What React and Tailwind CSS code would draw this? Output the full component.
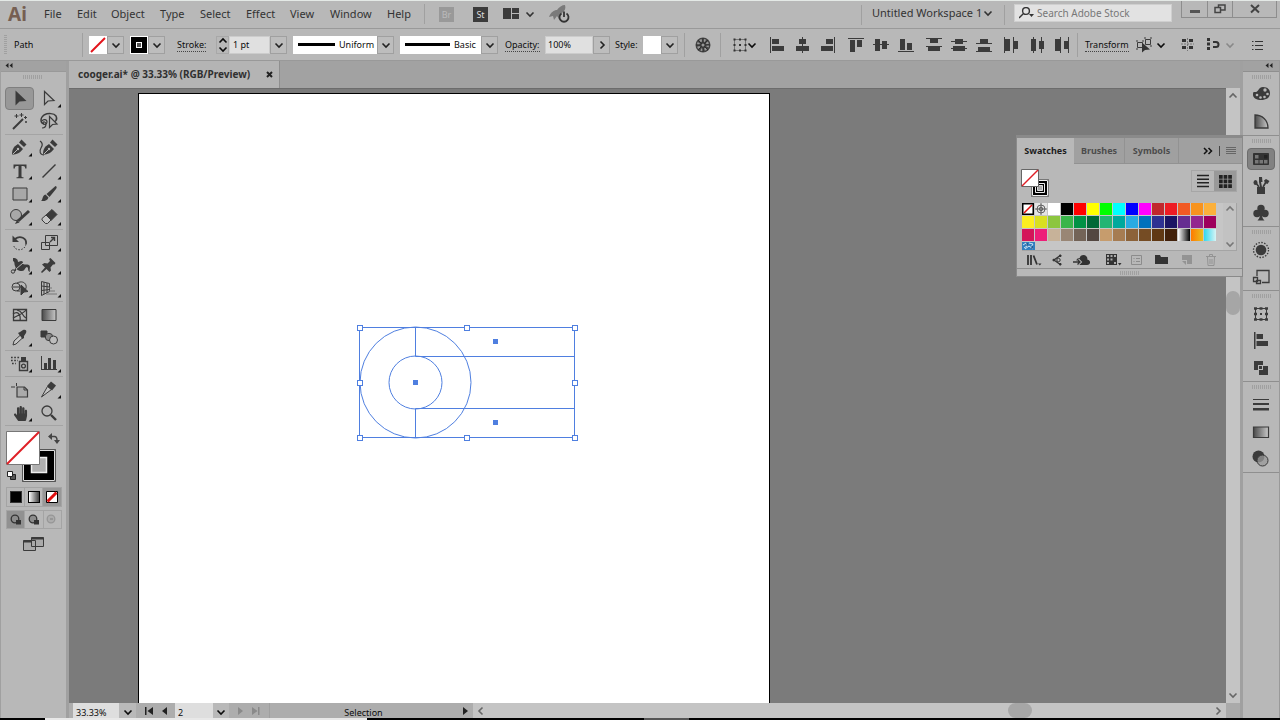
import { FaHandPaper } from "react-icons/fa";

const menus = [
  { name: "File", width: "w-[33px]" },
  { name: "Edit", width: "w-[34px]" },
  { name: "Object", width: "w-[49px]" },
  { name: "Type", width: "w-[40px]" },
  { name: "Select", width: "w-[46px]" },
  { name: "Effect", width: "w-[44px]" },
  { name: "View", width: "w-[40px]" },
  { name: "Window", width: "w-[57px]" },
  { name: "Help", width: "w-[40px]" },
];

const swatchRows = [
  ["none", "registration", "#ffffff", "#000000", "#ff0000", "#ffff00", "#00ff00", "#00ffff", "#0000ff", "#ff00ff", "#c1272d", "#ed1c24", "#f15a24", "#f7931e", "#fbb03b"],
  ["#fcee21", "#d9e021", "#8cc63f", "#39b54a", "#009245", "#006837", "#22b573", "#00a99d", "#29abe2", "#0071bc", "#2e3192", "#1b1464", "#662d91", "#93278f", "#9e005d"],
  ["#d4145a", "#ed1e79", "#c7b299", "#998675", "#736357", "#534741", "#c69c6d", "#a67c52", "#8c6239", "#754c24", "#603813", "#42210b", "linear-gradient(90deg,#fff,#000)", "linear-gradient(90deg,#ff7a00,#e8c020)", "linear-gradient(90deg,#30d8f0,#d8f4f4)"],
];

function Chevron({ dir = "down", className = "" }) {
  const paths = {
    down: "M1.5 3.5 5 7l3.5-3.5",
    up: "M1.5 6.5 5 3l3.5 3.5",
    right: "M3.5 1.5 7 5 3.5 8.5",
    left: "M6.5 1.5 3 5l3.5 3.5",
  };
  return (
    <svg viewBox="0 0 10 10" className={`h-[10px] w-[10px] shrink-0 ${className}`} fill="none" stroke="currentColor" strokeWidth="1.6">
      <path d={paths[dir]} />
    </svg>
  );
}

function DropButton({ label, dir }) {
  return (
    <button aria-label={label} className="flex h-[18px] w-[17px] shrink-0 items-center justify-center border border-[#a0a0a0] bg-[#bdbdbd] text-[#222]">
      <Chevron dir={dir} />
    </button>
  );
}

function Grip() {
  return (
    <svg viewBox="0 0 19 4" className="h-1 w-[19px]">
      <path d="M.5 0v4M2.5 0v4M4.5 0v4M6.5 0v4M8.5 0v4M10.5 0v4M12.5 0v4M14.5 0v4M16.5 0v4M18.5 0v4" stroke="#a0a0a0" />
    </svg>
  );
}

function Divider() {
  return <span className="h-6 w-px shrink-0 bg-[#a0a0a0]" />;
}

/* ---------- Menu bar ---------- */

function MenuBar() {
  return (
    <header className="flex h-[28px] shrink-0 border-t border-[#e4e9e6] bg-[#b8b8b8] text-[11px] text-[#333]">
      <div className="flex min-w-0 flex-1 items-center pb-px">
        <span className="w-[44px] shrink-0 pl-2 text-[19px] leading-6 font-bold text-[#765f52]">Ai</span>
        <nav className="flex">
          {menus.map((m) => (
            <button key={m.name} className={`shrink-0 text-left ${m.width}`}>
              {m.name}
            </button>
          ))}
        </nav>
        <span className="ml-[-3px] h-5 w-px shrink-0 bg-[#a0a0a0]" />
        <button disabled className="ml-[14px] h-[15px] w-[15px] shrink-0 bg-[#999] text-[9px] leading-[15px] text-[#bbb]">Br</button>
        <button className="ml-[19px] h-[15px] w-[15px] shrink-0 bg-[#3b3b3b] text-[9px] leading-[15px] text-[#ddd]">St</button>
        <button aria-label="Arrange documents" className="ml-[15px] flex shrink-0 items-center gap-[6px]">
          <svg viewBox="0 0 16 12" className="h-3 w-4" fill="#3b3b3b">
            <path d="M0 0h8v11H0zM9 0h7v5H9zM9 6h7v5H9z" />
          </svg>
          <Chevron />
        </button>
        <button aria-label="GPU performance" className="ml-[14px] shrink-0">
          <svg viewBox="0 0 22 20" className="h-5 w-[22px]">
            <path d="M0 13C2 8 5 6 8 6c2-3 5-5 8-5 1 3 0 6-3 8-2 2-3 3-3 6l-2-3-3 4-1-4z" fill="#7a7a7a" />
            <path d="M12.500 9.500a4.500 4.500 0 1 0 5 0M15 7.500v5.500" fill="none" stroke="#333" strokeWidth="1.800" />
          </svg>
        </button>
      </div>
      <span className="mt-1 h-5 w-px bg-[#a0a0a0]" />
      <label className="ml-[10px] flex h-6 items-center">
        <select aria-label="Workspace" className="w-[111px] appearance-none bg-transparent">
          <option>Untitled Workspace 1</option>
        </select>
        <Chevron />
      </label>
      <span className="mt-1 ml-[11px] h-5 w-px bg-[#a0a0a0]" />
      <label className="mt-[3px] ml-[9px] flex h-[18px] w-[158px] items-center border border-[#cfcfcf] bg-[#e2e2e2] pl-1">
        <svg viewBox="0 0 16 12" className="h-3 w-4 shrink-0" fill="none" stroke="#333" strokeWidth="1.4">
          <circle cx="7" cy="4" r="3.400" />
          <path d="M4.500 6.500 0 11" />
          <path d="M10 7h5l-2.500 3z" fill="#333" stroke="none" />
        </svg>
        <input aria-label="Search" placeholder="Search Adobe Stock" className="ml-[2px] w-full min-w-0 bg-transparent text-[10px] outline-none placeholder:text-[#777]" />
      </label>
      <div className="mr-[3px] ml-[9px] flex h-[17px] border border-t-0 border-[#8d8d8d]">
        <button aria-label="Minimize" className="flex w-[25px] items-center justify-center">
          <span className="mt-1 h-[3px] w-[10px] bg-[#555]" />
        </button>
        <button aria-label="Restore" className="flex w-[26px] items-center justify-center border-x border-[#8d8d8d]">
          <svg viewBox="0 0 12 10" className="h-[10px] w-3" fill="#b8b8b8" stroke="#444" strokeWidth="1.500">
            <path d="M4.500 1h6.500v5H4.500z" />
            <path d="M1 3.500h5.500v5H1z" />
          </svg>
        </button>
        <button aria-label="Close" className="flex w-[43px] items-center justify-center">
          <svg viewBox="0 0 10 10" className="h-[10px] w-[10px]" stroke="#444" strokeWidth="2">
            <path d="m1 1 8 7.500M9 1 1 8.500" />
          </svg>
        </button>
      </div>
    </header>
  );
}

/* ---------- Control bar ---------- */

const alignGroups = [
  [
    { name: "Align left", d: "M0 0h1v16H0zM2 2h7v5H2zM2 9h12v5H2z" },
    { name: "Align center", d: "M7 0h1v16H7zM4 2h7v5H4zM1 9h13v5H1z" },
    { name: "Align right", d: "M14 0h1v16h-1zM6 2h7v5H6zM1 9h12v5H1z" },
  ],
  [
    { name: "Align top", d: "M0 1h16v1H0zM2 3h5v12H2zM9 3h5v7H9z" },
    { name: "Align middle", d: "M0 7h16v1H0zM2 2h5v12H2zM9 4h5v8H9z" },
    { name: "Align bottom", d: "M0 14h16v1H0zM2 2h5v11H2zM9 6h5v7H9z" },
  ],
  [
    { name: "Distribute top", d: "M0 1h16v1H0zM4 2h8v4H4zM0 9h16v1H0zM2 10h12v4H2z" },
    { name: "Distribute vertical center", d: "M0 4h16v1H0zM4 2h8v5H4zM0 11h16v1H0zM2 9h12v5H2z" },
    { name: "Distribute bottom", d: "M0 6h16v1H0zM4 2h8v4H4zM0 14h16v1H0zM2 10h12v4H2z" },
  ],
  [
    { name: "Distribute left", d: "M0 0h1v16H0zM1 2h5v12H1zM9 0h1v16H9zM10 4h4v8h-4z" },
    { name: "Distribute horizontal center", d: "M4 0h1v16H4zM2 2h5v12H2zM12 0h1v16h-1zM10 4h5v8h-5z" },
    { name: "Distribute right", d: "M6 0h1v16H6zM1 2h5v12H1zM14 0h1v16h-1zM10 4h4v8h-4z" },
  ],
];

function ControlBar() {
  return (
    <section className="flex h-[33px] shrink-0 items-center border-y border-[#999] bg-[#b8b8b8] text-[9px] text-[#0c0c0c]">
      <svg viewBox="0 0 3 20" className="ml-1 h-5 w-[3px] shrink-0">
        <path d="M1.500 0v20" stroke="#a0a0a0" strokeWidth="3" strokeDasharray="1 1" />
      </svg>
      <span className="ml-[7px] w-[68px] shrink-0">Path</span>
      <Divider />
      <button aria-label="Fill" className="ml-[6px] h-[18px] w-[18px] shrink-0 bg-white">
        <svg viewBox="0 0 18 18" className="h-[18px] w-[18px]">
          <path d="m2 16 14-14" stroke="#e3131b" strokeWidth="1.900" />
        </svg>
      </button>
      <DropButton label="Fill options" />
      <button aria-label="Stroke color" className="ml-[6px] h-[18px] w-[18px] shrink-0 border border-white bg-black p-[5px]">
        <span className="block h-[6px] w-[6px] border border-white bg-[#555]" />
      </button>
      <DropButton label="Stroke color options" />
      <a href="#stroke" className="ml-[12px] w-[39px] shrink-0">
        <span className="border-b border-dotted border-[#444]">Stroke:</span>
      </a>
      <div className="flex h-[18px] w-[13px] shrink-0 flex-col items-center justify-between border border-[#a8a8a8]">
        <button aria-label="Increase stroke weight" className="flex h-2 items-center">
          <Chevron dir="up" />
        </button>
        <button aria-label="Decrease stroke weight" className="flex h-2 items-center">
          <Chevron />
        </button>
      </div>
      <input aria-label="Stroke weight" defaultValue="1 pt" className="h-[18px] w-[41px] shrink-0 border border-[#ccc] bg-[#e0e0e0] pl-[3px]" />
      <DropButton label="Stroke weight presets" />
      <label className="ml-[6px] flex h-[18px] w-[101px] shrink-0 items-center bg-white">
        <span className="ml-[5px] h-[3px] w-[37px] shrink-0 bg-black" />
        <select aria-label="Width profile" className="ml-[4px] w-[38px] appearance-none bg-transparent">
          <option>Uniform</option>
        </select>
        <DropButton label="Width profiles" />
      </label>
      <label className="ml-[6px] flex h-[18px] w-[98px] shrink-0 items-center bg-white">
        <span className="ml-[5px] h-[3px] w-[45px] shrink-0 bg-black" />
        <select aria-label="Brush definition" className="ml-[4px] w-[27px] appearance-none bg-transparent">
          <option>Basic</option>
        </select>
        <DropButton label="Brush definitions" />
      </label>
      <a href="#opacity" className="ml-[7px] w-[40px] shrink-0">
        <span className="border-b border-dotted border-[#444]">Opacity:</span>
      </a>
      <input aria-label="Opacity" defaultValue="100%" className="h-[18px] w-[48px] shrink-0 border border-[#ccc] bg-[#e0e0e0] pl-[2px]" />
      <DropButton label="Opacity slider" dir="right" />
      <span className="ml-[5px] w-[28px] shrink-0">Style:</span>
      <button aria-label="Graphic style" className="h-[18px] w-[18px] shrink-0 bg-white" />
      <DropButton label="Graphic styles" />
      <span className="ml-[6px] h-6 w-px shrink-0 bg-[#a0a0a0]" />
      <button aria-label="Recolor artwork" className="ml-[10px] shrink-0">
        <svg viewBox="0 0 16 16" className="h-4 w-4">
          <circle cx="8" cy="8" r="7.500" fill="#444" />
          <circle cx="8" cy="8" r="4.800" fill="none" stroke="#999" strokeWidth="2.500" strokeDasharray="2 1.770" />
          <path d="M8 1v14M1 8h14M3 3l10 10M13 3 3 13" stroke="#2e2e2e" />
          <circle cx="8" cy="8" r="1.500" fill="#999" />
        </svg>
      </button>
      <span className="ml-[9px] h-6 w-px shrink-0 bg-[#a0a0a0]" />
      <button aria-label="Align to" className="ml-[12px] flex shrink-0 items-center">
        <svg viewBox="0 0 14 14" className="h-[14px] w-[14px]" fill="none" stroke="#333">
          <path d="M1.500 1.500h11v11h-11z" strokeDasharray="1 1" />
          <path d="M.5 1.500h2M6 1.500h2M11.500 1.500h2M.5 7h2M6 7h2M11.500 7h2M.5 12.500h2M6 12.500h2M11.500 12.500h2" strokeWidth="2" />
        </svg>
        <Chevron />
      </button>
      <div className="ml-[8px] flex shrink-0 gap-[3px]">
        {alignGroups.map((group) => (
          <div key={group[0].name} className="flex">
            {group.map((a) => (
              <button key={a.name} aria-label={a.name} className="flex w-[25px] justify-center">
                <svg viewBox="0 0 16 16" className="h-4 w-4" fill="#3b3b3b">
                  <path d={a.d} />
                </svg>
              </button>
            ))}
          </div>
        ))}
      </div>
      <span className="ml-[3px] h-6 w-px shrink-0 bg-[#a0a0a0]" />
      <a href="#transform" className="ml-[7px] w-[51px] shrink-0">
        <span className="border-b border-dotted border-[#444]">Transform</span>
      </a>
      <button aria-label="Select similar" className="flex shrink-0 items-center gap-[3px]">
        <svg viewBox="0 0 17 16" className="h-4 w-[17px]" fill="none" stroke="#3b3b3b">
          <path d="M1.500 5.500h5v5h-5zM9.500 2.500h5v5h-5zM0 4h2M6 4h2M0 12h2M8 1h2M14 1h2M14 9h2" />
          <path d="M6 5.500v10l3-2.500 5-.5z" fill="#333" stroke="none" />
        </svg>
        <Chevron />
      </button>
      <div className="ml-auto flex shrink-0 items-center">
        <button aria-label="Align to pixel grid">
          <svg viewBox="0 0 13 13" className="h-[13px] w-[13px]" fill="#333">
            <path d="M1 1h4v3H1zM8 1h4v3H8zM1 8h4v3H1zM8 8h4v3H8z" />
            <path d="M6.500 0v13M0 6h13" stroke="#777" strokeDasharray="2 1" />
          </svg>
        </button>
        <button aria-label="Snap options" className="ml-3 flex items-center gap-1">
          <svg viewBox="0 0 15 13" className="h-[13px] w-[15px]" fill="#333">
            <path d="M1 0h3v3H1zM1 4.500h3v3H1zM1 9h3v3H1z" />
            <path d="M7 4h3a2.200 2.200 0 0 1 0 5H7" fill="none" stroke="#333" strokeWidth="2" />
          </svg>
          <Chevron className="text-[#888]" />
        </button>
        <button aria-label="Control bar menu" className="mr-[16px] ml-[17px]">
          <svg viewBox="0 0 12 10" className="h-[10px] w-3" stroke="#333">
            <path d="M0 1.500h1.500M3 1.500h8M0 5.500h1.500M3 5.500h8M0 9.500h1.500M3 9.500h8" />
          </svg>
        </button>
      </div>
    </section>
  );
}

/* ---------- Tools panel ---------- */

const dark = "#3b3b3b";

const nib = (
  <g fill={dark}>
    <path d="M5 18c0-5 1-8 6-11l5 5c-3 4-6 5-11 6z" />
    <path d="m12 5.500 2.500-3 5 5-2.500 2.500z" />
    <path d="m5.500 17.500 5-5" stroke="#b8b8b8" />
    <circle cx="11" cy="12" r="1.200" fill="#b8b8b8" />
  </g>
);

const toolGroups = [
  [
    { name: "Selection", art: <path d="M8.500 2.500v15l4-4 7-.5z" fill={dark} />, active: true },
    { name: "Direct Selection", flag: true, art: <path d="M8.500 3.500v13l3.500-3.500 6-.5z" fill="none" stroke={dark} strokeWidth="1.200" /> },
    {
      name: "Magic Wand",
      art: (
        <g stroke={dark} fill="none">
          <path d="m6 18 10-10" strokeWidth="2" />
          <path d="M9.500 3v4M7.500 5h4M14.500 2v4M12.500 4h4M18.500 5v3M17 6.500h3M19 10v2M18 11h2" />
        </g>
      ),
    },
    {
      name: "Lasso",
      art: (
        <g stroke={dark} fill="none">
          <path d="M8 13c-4-1-4-6 0-9 4-2 10-2 12 1 2 4-1 6-4 7" strokeWidth="1.500" />
          <path d="M6 10c1-2 5-2 5 1s-4 3-4 1 3-1 3 1-1 4-4 4" strokeWidth="1.200" />
          <path d="M13.500 5.500v11l3-3 4.500-.5z" fill="#b8b8b8" strokeWidth="1.200" />
        </g>
      ),
    },
  ],
  [
    { name: "Pen", flag: true, art: nib },
    {
      name: "Curvature",
      art: (
        <g>
          <g transform="translate(2 0)">{nib}</g>
          <path d="M4 4c3 2 3 4 1 7s-1 7 3 7" fill="none" stroke={dark} strokeWidth="1.200" />
        </g>
      ),
    },
    { name: "Type", flag: true, art: <path d="M6.500 4.500h13v4h-1.300c0-2-.7-2.600-2.200-2.600h-1.500v10c0 1 .5 1.300 2 1.300v1h-7v-1c1.500 0 2-.3 2-1.300v-10H10c-1.500 0-2.200.6-2.200 2.600H6.500z" fill={dark} /> },
    { name: "Line Segment", flag: true, art: <path d="M6.500 17.500 19.500 4.500" stroke={dark} strokeWidth="1.500" /> },
    { name: "Rectangle", flag: true, art: <path d="M6 5h14v12H6z" fill="#a8a8a8" stroke={dark} /> },
    {
      name: "Paintbrush",
      flag: true,
      art: (
        <g fill={dark}>
          <path d="M19.500 3c1.500.5 1.500 1.500.5 3l-6.500 8-3-3z" />
          <path d="m9.500 11.500 3 3c-1 3-4 4-7.500 3.500 2-1 1-5.500 4.500-6.500z" />
        </g>
      ),
    },
    {
      name: "Shaper",
      flag: true,
      art: (
        <g>
          <circle cx="9" cy="9" r="5.500" fill="#a8a8a8" stroke={dark} />
          <path d="m11 15 11-10" stroke={dark} strokeWidth="3" />
          <path d="m8 18 2-4 2.500 2.500z" fill={dark} />
        </g>
      ),
    },
    {
      name: "Eraser",
      flag: true,
      art: (
        <g stroke={dark}>
          <path d="m10 9 6-5.500 5 5-6 6z" fill={dark} />
          <path d="m10 9 5 5-3.500 3.500h-2L6 14v-1.500z" fill="#c4c4c4" />
        </g>
      ),
    },
  ],
  [
    {
      name: "Rotate",
      flag: true,
      art: (
        <g fill="none" stroke={dark}>
          <path d="M8 7c5-4 12-1 11 5" strokeWidth="1.800" />
          <path d="M19 12c-1 7-11 8-12.500 1" strokeDasharray="1.500 1.500" />
          <path d="M5.500 3.500v6.500H12z" fill={dark} stroke="none" />
        </g>
      ),
    },
    {
      name: "Scale",
      flag: true,
      art: (
        <g fill="none" stroke={dark}>
          <path d="M9.500 3.500h12v10h-12zM5.500 10.500h8v7h-8z" />
          <path d="m14 10 4-4M15 5.500h3.500V9" strokeWidth="1.400" />
        </g>
      ),
    },
    {
      name: "Width",
      flag: true,
      art: (
        <g fill={dark}>
          <path d="M6 3c4 0 5 2 5 4l3-1c2 0 2 1 2 3 2 1 4 0 6 1 2 2 0 4 1 7-3-1-1-4-3-5-2 0-2 4-5 4-4 0-6-2-7-5s0-4-2-5z" />
          <path d="M6 17c2-1 3-3 4-5M9 15c-2 0-3 1-4 3" fill="none" stroke={dark} strokeWidth="1.300" />
          <path d="m9 14 7-6" stroke="#b8b8b8" />
          <circle cx="6" cy="16.500" r="1.700" fill="#b8b8b8" stroke={dark} />
        </g>
      ),
    },
    { name: "Puppet Warp", flag: true, art: <path d="m13 4 1.500-1 5 5-1 1.500-1.500 0-2.500 3 .5 3-1.500 1.500-3-3-4.500 4-1-1 4-4.500-3-3L8.500 8l3 .5L14 6z" fill={dark} /> },
    {
      name: "Shape Builder",
      flag: true,
      art: (
        <g fill="none" stroke={dark}>
          <circle cx="9" cy="9" r="4" />
          <path d="M10 5c8-4 12 4 7 8M10 13h3M6 9h8" />
          <path d="M14 7v10l3-3 4-.5z" fill={dark} />
        </g>
      ),
    },
    {
      name: "Perspective Grid",
      flag: true,
      art: (
        <g fill="none" stroke={dark}>
          <path d="M5.500 3.500v14l8-4v-8zM5.500 8l8 1M5.500 12.500l8-1M8 4v12M11 5v10" />
          <path d="M13 10h3M13 13h6M10 16h11" stroke="#777" />
        </g>
      ),
    },
  ],
  [
    {
      name: "Mesh",
      art: (
        <g fill="none" stroke={dark}>
          <path d="M6.500 5.500h13v11h-13z" strokeWidth="1.300" />
          <path d="M6 10c5-4 8 1 7 7M10 6c6 1 4 5 9 8M6 14c5-3 10-4 13-8" strokeWidth="1.200" />
        </g>
      ),
    },
    { name: "Gradient", art: <path d="M6 5.500h14v11H6z" fill="url(#toolGradient)" stroke={dark} /> },
    {
      name: "Eyedropper",
      flag: true,
      art: (
        <g>
          <path d="m6 18 1-4 6.500-6 2.500 2.500L9 17z" fill="#c4c4c4" stroke={dark} />
          <path d="m11 6 2-1 3-2c3-1 4 1 3 3l-2 3v2l-1.500 1z" fill={dark} />
        </g>
      ),
    },
    {
      name: "Blend",
      art: (
        <g stroke={dark}>
          <path d="M5 4h6v6H5z" fill={dark} />
          <circle cx="13" cy="10" r="3.700" fill="#888" />
          <circle cx="17.500" cy="13" r="4" fill="#bdbdbd" />
        </g>
      ),
    },
  ],
  [
    {
      name: "Symbol Sprayer",
      flag: true,
      art: (
        <g fill="none" stroke={dark}>
          <path d="M12.500 8.500h8v9h-8z" strokeWidth="1.400" />
          <path d="M14 4h5v4h-5z" fill={dark} stroke="none" />
          <circle cx="16.500" cy="13" r="1.900" strokeWidth="1.300" />
          <path d="M4 4.500h9M4 7.500h7M5 10.500h4" strokeWidth="1.700" strokeDasharray="1.700 1.500" />
        </g>
      ),
    },
    { name: "Column Graph", flag: true, art: <path d="M5 3h1v13h15v1H5zM8 10h3v7H8zM12 5h3v12h-3zM17 7h3v10h-3z" fill={dark} /> },
  ],
  [
    {
      name: "Artboard",
      art: (
        <g fill="none" stroke={dark}>
          <path d="M10 8h7.500l3 3v7H10z" fill="#aaa" strokeWidth="1.200" />
          <path d="M9.500 4v3M4 8h4M17 8v3h3" />
        </g>
      ),
    },
    {
      name: "Slice",
      flag: true,
      art: (
        <g>
          <path d="m5.500 18 6-10.500 4 3z" fill="#c4c4c4" stroke={dark} />
          <path d="m11 7 4-4.500 5 4-4 5z" fill={dark} />
        </g>
      ),
    },
    { name: "Hand", flag: true, art: <FaHandPaper x="6" y="4" size="15" color={dark} /> },
    {
      name: "Zoom",
      art: (
        <g fill="none" stroke={dark}>
          <circle cx="11" cy="9" r="5" strokeWidth="1.300" />
          <path d="m15 13 5 5" strokeWidth="2.400" />
        </g>
      ),
    },
  ],
];

function ToolsPanel() {
  return (
    <aside className="flex w-[69px] shrink-0 flex-col border-r-[3px] border-l border-[#a0a0a0] bg-[#b8b8b8]">
      <button aria-label="Collapse tools" className="flex h-[11px] shrink-0 items-center border-b border-[#999] bg-[#a2a2a2] pl-[4px]">
        <svg viewBox="0 0 8 6" className="h-[6px] w-2" fill="#222">
          <path d="M3.500 0v5L.5 2.500zM7.500 0v5l-3-2.500z" />
        </svg>
      </button>
      <div className="flex h-[15px] shrink-0 items-center pl-[22px] pb-[5px]">
        <Grip />
      </div>
      <div className="flex flex-col pl-1">
        {toolGroups.map((group) => (
          <div key={group[0].name} className="mb-px flex w-[58px] flex-wrap border-b border-[#a4a4a4] pb-px">
            {group.map((t) => (
              <button key={t.name} aria-label={t.name} className={`flex h-[23px] w-[29px] items-center justify-center ${t.active ? "rounded-sm border border-[#7f7f7f] bg-[#989898]" : ""}`}>
                <svg viewBox="0 0 26 22" className="h-[22px] w-[26px] shrink-0">
                  {t.art}
                  {t.flag && <path d="M25 16v3.500h-3.500z" fill="#111" />}
                </svg>
              </button>
            ))}
          </div>
        ))}
      </div>
      <button aria-label="Fill and stroke" className="mt-[4px] ml-[5px] h-[52px] w-[54px] shrink-0">
        <svg viewBox="0 0 54 52" className="h-[52px] w-[54px]">
          <path d="M16.500 18.500h33v32h-33z" fill="#000" stroke="#555" />
          <path d="M17.500 19.500h31v30h-31z" fill="none" stroke="#ddd" />
          <path d="M25.500 26.500h15v15h-15z" fill="#b0b0b0" stroke="#eee" strokeWidth="1.500" />
          <path d="M.5 .5h33v33H.5z" fill="#fff" stroke="#777" />
          <path d="M1 33 33 1" stroke="#df1f26" strokeWidth="1.900" />
          <path d="M45 5.500h3.500q2.500 0 2.500 4" fill="none" stroke="#444" strokeWidth="1.500" />
          <path d="M42 5.500 46 2v7zM48 9h6l-3 4z" fill="#444" />
          <path d="M4.500 43.500h5v5h-5z" fill="#555" stroke="#222" />
          <path d="M1.500 40.500h5v5h-5z" fill="#fff" stroke="#222" />
        </svg>
      </button>
      <div className="mt-[4px] ml-[5px] flex h-[20px] w-[56px] shrink-0 border border-[#a4a4a4]">
        <button aria-label="Color" className="flex w-[17px] items-center justify-center">
          <span className="h-3 w-3 border border-[#333] bg-black" />
        </button>
        <button aria-label="Gradient" className="flex flex-1 items-center justify-center border-x border-[#a4a4a4]">
          <span className="h-3 w-3 border border-black bg-linear-to-r from-white to-[#444]" />
        </button>
        <button aria-label="None" className="flex w-[18px] items-center justify-center bg-[#989898]">
          <svg viewBox="0 0 12 12" className="h-3 w-3">
            <path d="M.5.5h11v11H.5z" fill="#fff" stroke="#000" />
            <path d="M1.500 10.500l9-9" stroke="#e01010" strokeWidth="3" />
          </svg>
        </button>
      </div>
      <div className="mt-[3px] ml-[5px] flex h-[19px] w-[56px] shrink-0 border border-[#a4a4a4]">
        {["Draw Normal", "Draw Behind", "Draw Inside"].map((name, i) => (
          <button key={name} aria-label={name} className={`flex flex-1 items-center justify-center ${i === 0 ? "bg-[#919191]" : "border-l border-[#a4a4a4]"}`}>
            <svg viewBox="0 0 12 12" className={`h-3 w-3 ${i === 2 ? "opacity-25" : ""}`}>
              <circle cx="5" cy="5" r="3.800" fill="#8c8c8c" stroke="#333" strokeWidth="1.300" />
              {i === 2 ? <path d="M4 4h3v2H4z" fill="#333" /> : <path d="M6 6h5v4.500H6z" fill="#333" />}
            </svg>
          </button>
        ))}
      </div>
      <button aria-label="Screen mode" className="mt-[7px] ml-[22px] h-4 w-[22px] shrink-0">
        <svg viewBox="0 0 22 16" className="h-4 w-[22px]" fill="#aaa" stroke={dark}>
          <path d="M.5 4.500h12v10H.5zM8.500 1.500h12v9h-12z" />
          <path d="M.5 5.500h8M8.500 2.500h12" strokeWidth="2" />
        </svg>
      </button>
      <svg className="h-0 w-0">
        <defs>
          <linearGradient id="toolGradient">
            <stop offset="0" stopColor="#4a4a4a" />
            <stop offset="1" stopColor="#c8c8c8" />
          </linearGradient>
        </defs>
      </svg>
    </aside>
  );
}

/* ---------- Right dock ---------- */

const dockGroups = [
  [
    {
      name: "Color",
      art: (
        <g fill={dark}>
          <path d="M4 8c5 1 4-5 9-5 5 0 7 3 7 6 0 5-4 7-9 7-4 0-8-2-8-5 0-2 0-3 1-3z" />
          <g fill="#b8b8b8">
            <circle cx="15" cy="6" r="1.700" />
            <circle cx="7" cy="11" r="1.300" />
            <circle cx="10.500" cy="13.500" r="1.300" />
            <circle cx="14.500" cy="13" r="1.300" />
            <circle cx="17.500" cy="10" r="1.300" />
          </g>
        </g>
      ),
    },
    { name: "Color Guide", art: <path d="M5 4c7 0 13 5 13 13H5z" fill="url(#toolGradient)" stroke={dark} strokeWidth="1.300" /> },
  ],
  [
    {
      name: "Swatches",
      active: true,
      art: (
        <g>
          <path d="M3.500 5.500h15v11h-15z" fill="#333" stroke="#333" />
          <path d="M5 7h3.500v3.500H5zM14 12h3.500v3.500H14zM5 12h3.500v3.500H5zM9.500 12H13v3.500H9.500z" fill="#777" />
          <path d="M14 7h3.500v3.500H14z" fill="#222" />
        </g>
      ),
    },
    {
      name: "Brushes",
      art: (
        <g fill={dark}>
          <path d="M7 12h8v7H7zM9 2h3l.5 5H11l1 5h-2L9 7z" />
          <path d="m9 12-3-4M13 12l3-5" stroke={dark} strokeWidth="1.700" />
          <ellipse cx="5.500" cy="7.500" rx="2" ry="2.500" />
          <path d="m14 5.500 2-1.500 3.500 2-2 3L15 8z" />
        </g>
      ),
    },
    {
      name: "Symbols",
      art: (
        <g fill={dark}>
          <circle cx="11" cy="6.500" r="3.700" />
          <circle cx="7" cy="11.500" r="3.700" />
          <circle cx="15" cy="11.500" r="3.700" />
          <path d="M10 9h2c0 5 0 7 2.500 9.500h-7C10 16 10 14 10 9z" />
        </g>
      ),
    },
  ],
  [
    {
      name: "Appearance",
      art: (
        <g fill={dark}>
          <circle cx="11" cy="11" r="5.300" />
          <circle cx="11" cy="11" r="7.500" fill="none" stroke={dark} strokeWidth="1.300" strokeDasharray="1.500 1.450" />
        </g>
      ),
    },
    {
      name: "Graphic Styles",
      art: (
        <g fill="none" stroke={dark} strokeWidth="1.300">
          <path d="M7 10V4.500h12v12h-7" />
          <path d="M3.500 11.500h4v4h-4zM6.500 14.500h4v3h-4z" />
        </g>
      ),
    },
  ],
  [
    {
      name: "Transform",
      art: (
        <g fill="none" stroke={dark}>
          <path d="M5.500 5.500h11v11h-11z" />
          <path d="M4 5.500h3M9.500 5.500h3M15 5.500h3M4 16.500h3M9.500 16.500h3M15 16.500h3M4 11h3M15 11h3" strokeWidth="2.500" />
          <path d="M10 11h2" strokeWidth="2" />
        </g>
      ),
    },
    { name: "Align", art: <path d="M4 2h1.500v17H4zM6.500 4H13v5H6.500zM6.500 11H18v5H6.500z" fill={dark} /> },
    {
      name: "Pathfinder",
      art: (
        <g fill={dark}>
          <path d="M4 4h9v4H8v5H4zM9 13h4V9h5v9H9z" />
          <path d="M9 9h3v3H9z" />
        </g>
      ),
    },
  ],
  [
    { name: "Stroke", art: <path d="M3 5h16v1H3zM3 9h16v2H3zM3 14h16v2.500H3z" fill={dark} /> },
    { name: "Gradient", art: <path d="M3.500 6h15v10.500h-15z" fill="url(#toolGradient)" stroke={dark} strokeWidth="1.200" /> },
    {
      name: "Transparency",
      art: (
        <g>
          <circle cx="8.500" cy="8.500" r="6" fill={dark} />
          <circle cx="12.500" cy="12.500" r="5.500" fill="#999" fillOpacity=".75" stroke={dark} />
        </g>
      ),
    },
  ],
];

function RightDock() {
  return (
    <aside className="flex w-[37px] shrink-0 flex-col border-r border-[#999] bg-[#b8b8b8]">
      <button aria-label="Expand panels" className="flex h-[10px] shrink-0 items-center justify-end bg-[#a2a2a2] pr-[6px]">
        <svg viewBox="0 0 8 6" className="h-[6px] w-2" fill="#222">
          <path d="M3.500 0v5L.5 2.500zM7.500 0v5l-3-2.500z" />
        </svg>
      </button>
      {dockGroups.map((group) => (
        <div key={group[0].name} className="flex flex-col items-center border-t border-[#8f8f8f]">
          <div className="flex h-[9px] items-center">
            <Grip />
          </div>
          {group.map((item) => (
            <button key={item.name} aria-label={item.name} className="flex h-[27px] items-center">
              <span className={`flex h-[22px] w-[28px] items-center justify-center ${item.active ? "rounded-sm border border-[#6d6d6d] bg-[#828282]" : ""}`}>
                <svg viewBox="0 0 22 22" className="h-[22px] w-[22px] shrink-0">
                  {item.art}
                </svg>
              </span>
            </button>
          ))}
        </div>
      ))}
      <div className="border-t border-[#8f8f8f]" />
    </aside>
  );
}

/* ---------- Swatches panel ---------- */

function Swatch({ color }) {
  if (color === "none") {
    return (
      <svg viewBox="0 0 12 12" className="h-3 w-3">
        <path d="M.75.75h10.500v10.500H.75z" fill="#fff" stroke="#000" strokeWidth="1.500" />
        <path d="m2 10 8-8" stroke="#e01010" strokeWidth="1.600" />
      </svg>
    );
  }
  if (color === "registration") {
    return (
      <svg viewBox="0 0 12 12" className="h-3 w-3" fill="none" stroke="#444" strokeWidth=".8">
        <path d="M0 0h12v12H0z" fill="#e4e4e4" stroke="none" />
        <circle cx="6" cy="6" r="4" />
        <circle cx="6" cy="6" r="1.800" />
        <path d="M6 0v12M0 6h12" />
      </svg>
    );
  }
  return <span className="block h-3 w-3" style={{ background: color }} />;
}

function SwatchesPanel() {
  return (
    <section className="absolute top-[47px] right-0 w-[227px] border-x border-t-[3px] border-b border-[#8a8a8a] bg-[#b8b8b8]">
      <div className="flex h-[26px] bg-[#a0a0a0] text-[9px] font-bold text-[#4c4c4c]">
        <button className="w-[57px] bg-[#b8b8b8] text-[#1c1c1c]">Swatches</button>
        <button className="w-[51px] border-r border-b border-[#929292]">Brushes</button>
        <button className="w-[54px] border-r border-b border-[#929292]">Symbols</button>
        <div className="flex flex-1 items-center justify-end gap-[6px] border-b border-[#929292] pr-[6px]">
          <button aria-label="Collapse panel">
            <svg viewBox="0 0 10 8" className="h-2 w-[10px]" fill="none" stroke="#111" strokeWidth="1.500">
              <path d="M1 1l3 3-3 3M5.500 1l3 3-3 3" />
            </svg>
          </button>
          <span className="h-[10px] w-px bg-[#444]" />
          <button aria-label="Panel menu">
            <svg viewBox="0 0 10 8" className="h-2 w-[10px]" stroke="#666">
              <path d="M0 .5h10M0 2.500h10M0 4.500h10M0 6.500h10" />
            </svg>
          </button>
        </div>
      </div>
      <div className="flex h-[39px] items-start justify-between pt-[5px] pr-[5px] pl-[4px]">
        <button aria-label="Fill and stroke">
          <svg viewBox="0 0 28 28" className="h-7 w-7">
            <path d="M10.500 10.500h17v17h-17z" fill="#000" stroke="#777" />
            <path d="M11.500 11.500h15v15h-15z" fill="none" stroke="#eee" />
            <path d="M14.500 14.500h9v9h-9z" fill="#000" stroke="#eee" />
            <path d="M16.500 16.500h5v5h-5z" fill="#aaa" stroke="#ddd" />
            <path d="M.5.5h17v17H.5z" fill="#fff" stroke="#666" />
            <path d="M1 17 17 1" stroke="#df1f26" strokeWidth="1.500" />
          </svg>
        </button>
        <div className="mt-px flex h-[22px] w-[46px] border border-[#a6a6a6]">
          <button aria-label="List view" className="flex flex-1 items-center justify-center">
            <svg viewBox="0 0 12 14" className="h-[14px] w-3" stroke="#222" strokeWidth="1.400">
              <path d="M0 1.500h12M0 5.200h12M0 8.800h12M0 12.500h12" />
            </svg>
          </button>
          <button aria-label="Thumbnail view" className="flex flex-1 items-center justify-center bg-[#999]">
            <svg viewBox="0 0 13 13" className="h-[13px] w-[13px]" fill="#222">
              <path d="M0 0h3.700v3.700H0zM4.600 0h3.700v3.700H4.600zM9.200 0h3.700v3.700H9.200zM0 4.600h3.700v3.700H0zM4.600 4.600h3.700v3.700H4.600zM9.200 4.600h3.700v3.700H9.200zM0 9.200h3.700v3.700H0zM4.600 9.200h3.700v3.700H4.600zM9.200 9.200h3.700v3.700H9.200z" />
            </svg>
          </button>
        </div>
      </div>
      <div className="mr-[5px] ml-[5px] flex h-[48px] border-r border-b border-[#a4a4a4]">
        <div className="flex-1 overflow-hidden bg-[#c6c6c6]">
          {swatchRows.map((row, i) => (
            <div key={i} className="flex h-[13px] gap-px">
              {row.map((color) => (
                <button key={color} aria-label={color} className="h-3 w-3">
                  <Swatch color={color} />
                </button>
              ))}
            </div>
          ))}
          <button aria-label="Pattern" className="block h-3 w-[13px]">
            <svg viewBox="0 0 13 12" className="h-3 w-[13px]">
              <path d="M0 0h13v12H0z" fill="#2f7fc0" />
              <path d="m1 3 3-2 1 3-3 2M7 1l4 1-2 3M3 7l4-3 4 3" fill="none" stroke="#cfe4f4" />
              <path d="M5 1v3M10 4v3" stroke="#123f70" />
            </svg>
          </button>
        </div>
        <div className="flex w-[13px] flex-col items-center justify-between bg-[#c2c2c2] py-[1px] text-[#777]">
          <Chevron dir="up" />
          <Chevron />
        </div>
      </div>
      <div className="flex h-[17px] items-center pl-[9px]">
        <button aria-label="Swatch libraries" className="w-[25px]">
          <svg viewBox="0 0 16 12" className="h-3 w-4" stroke="#333" strokeWidth="1.800">
            <path d="M2 1v10M5 1v10M7.500 1.500l3.500 9" />
            <path d="M12 9.500h3.500l-1.700 2z" fill="#333" stroke="none" />
          </svg>
        </button>
        <button aria-label="Color themes" className="w-[22px]">
          <svg viewBox="0 0 12 12" className="h-3 w-3" stroke="#333" fill="none">
            <path d="M8.500 2 3 6l5.500 4" strokeWidth="1.300" />
            <circle cx="7.500" cy="6" r="1.700" />
            <path d="M8.500 1h1.500v1.500H8.500zM8.500 9.500h1.500V11H8.500zM2 5.300h1.500v1.500H2z" fill="#333" />
          </svg>
        </button>
        <button aria-label="Add to library" className="w-[33px]">
          <svg viewBox="0 0 18 12" className="h-3 w-[18px]" fill="#333">
            <path d="M5.500 11H14c4 0 4-5 .5-5.300C14.500 2.500 12.700 1 10.500 1 8.500 1 7 2.300 6.700 4 4.500 4 3.500 5 3.500 6.500" />
            <path d="M0 8h7M5 5.500 7.500 8 5 10.500" fill="none" stroke="#b8b8b8" strokeWidth="2.500" />
            <path d="M0 8h6.500M4.500 5.500 7 8l-2.500 2.500" fill="none" stroke="#333" strokeWidth="1.300" />
          </svg>
        </button>
        <button aria-label="Swatch kinds" className="w-[25px]">
          <svg viewBox="0 0 16 12" className="h-3 w-4" fill="#333">
            <path d="M0 0h11v11H0z" />
            <path d="M1 1h2v2H1zM8 1h2v2H8zM4.500 4.500h2v2h-2zM1 8h2v2H1zM8 8h2v2H8zM4.500 1h2v2h-2zM1 4.500h2v2H1z" fill="#aaa" />
            <path d="M12 9h3.500L13.700 11.500z" />
          </svg>
        </button>
        <button aria-label="Swatch options" disabled className="w-[24px]">
          <svg viewBox="0 0 12 12" className="h-3 w-3" fill="none" stroke="#8c8c8c">
            <path d="M.5 1.500h10v9H.5zM2.500 4.500h1M5 4.500h4M2.500 7.500h1M5 7.500h4" />
          </svg>
        </button>
        <button aria-label="New color group" className="w-[27px]">
          <svg viewBox="0 0 13 11" className="h-[11px] w-[13px]" fill="#333">
            <path d="M0 1h5l1 2h7v7H0z" />
          </svg>
        </button>
        <button aria-label="New swatch" disabled className="w-[24px]">
          <svg viewBox="0 0 10 11" className="h-[11px] w-[10px]" fill="#939393">
            <path d="M0 1h10v9H5V6H0z" />
            <path d="M0 7h4v4z" />
          </svg>
        </button>
        <button aria-label="Delete swatch" disabled>
          <svg viewBox="0 0 10 12" className="h-3 w-[10px]" fill="none" stroke="#939393">
            <path d="M0 2.500h10M3.500 2V.5h3V2M1.500 3l.5 8.500h6L8.500 3M4 5v5M6 5v5" />
          </svg>
        </button>
      </div>
      <div className="flex h-[8px] items-center justify-center border-t border-[#8f8f8f]">
        <Grip />
      </div>
    </section>
  );
}

/* ---------- Document ---------- */

function Artwork() {
  const handles = [[1, 1], [108, 1], [216, 1], [1, 56], [216, 56], [1, 111], [108, 111], [216, 111]];
  const centers = [[136, 15], [56, 56], [136, 96]];
  return (
    <svg viewBox="-3 -3 224 120" className="absolute top-[234px] left-[286px] h-[120px] w-[224px]" fill="none" stroke="#4f7fe0">
      <path d="M1.500 1.500h215v110h-215z" />
      <path d="M57.500 1.500h159v29h-159zM57.500 82.500h159v29h-159z" />
      <circle cx="57.500" cy="56.500" r="55.500" />
      <circle cx="57.500" cy="56.500" r="26.500" />
      {handles.map(([x, y]) => (
        <rect key={`${x}-${y}`} x={x - 1.5} y={y - 1.5} width="5" height="5" fill="#fff" />
      ))}
      {centers.map(([x, y]) => (
        <rect key={`${x}-${y}`} x={x - 1} y={y - 2} width="5" height="5" fill="#4f7fe0" stroke="none" />
      ))}
    </svg>
  );
}

function StatusBar() {
  return (
    <footer className="flex h-[15px] shrink-0 bg-[#adadad] text-[9px] text-[#0c0c0c]">
      <input aria-label="Zoom level" defaultValue="33.33%" className="ml-[4px] h-[15px] w-[46px] bg-[#dedede] pt-[4px] pl-[3px]" />
      <button aria-label="Zoom presets" className="flex w-[17px] items-center justify-center bg-[#b9b9b9] pt-[3px]">
        <Chevron />
      </button>
      <div className="flex w-[39px] items-center justify-center gap-[8px]">
        <button aria-label="First artboard">
          <svg viewBox="0 0 9 8" className="h-2 w-[9px]" fill="#222">
            <path d="M0 0h1.500v8H0zM8 0v8L2.500 4z" />
          </svg>
        </button>
        <button aria-label="Previous artboard">
          <svg viewBox="0 0 5 8" className="h-2 w-[5px]" fill="#222">
            <path d="M5 0v8L0 4z" />
          </svg>
        </button>
      </div>
      <input aria-label="Artboard" defaultValue="2" className="h-[15px] w-[38px] bg-[#dedede] pt-[4px] pl-[3px]" />
      <button aria-label="Artboard list" className="flex w-[16px] items-center justify-center bg-[#b9b9b9] pt-[3px]">
        <Chevron />
      </button>
      <div className="flex w-[41px] items-center justify-center gap-[8px] border-r border-[#a0a0a0]">
        <button aria-label="Next artboard" disabled>
          <svg viewBox="0 0 5 8" className="h-2 w-[5px]" fill="#8a8a8a">
            <path d="M0 0v8l5-4z" />
          </svg>
        </button>
        <button aria-label="Last artboard" disabled>
          <svg viewBox="0 0 9 8" className="h-2 w-[9px]" fill="#8a8a8a">
            <path d="M7 0h1.500v8H7zM1 0v8l5.500-4z" />
          </svg>
        </button>
      </div>
      <span className="w-[187px] pt-[4px] text-center leading-[11px]">Selection</span>
      <button aria-label="Status options" className="flex w-[16px] items-center justify-center">
        <svg viewBox="0 0 5 8" className="h-2 w-[5px]" fill="#222">
          <path d="M0 0v8l5-4z" />
        </svg>
      </button>
      <div className="flex flex-1 items-center justify-between bg-[#c4c4c4] px-[3px] text-[#666]">
        <Chevron dir="left" />
        <span className="mr-[181px] ml-auto h-[15px] w-6 rounded-full bg-[#a6a6a6]" />
        <Chevron dir="right" />
      </div>
      <span className="w-[14px] bg-[#aaa]" />
    </footer>
  );
}

function DocumentArea() {
  return (
    <main className="flex min-w-0 flex-1 flex-col border-r-[3px] border-[#a0a0a0]">
      <div className="flex h-[27px] shrink-0 bg-[#a2a2a2]">
        <div className="flex w-[211px] items-center justify-between border-r border-[#8f8f8f] bg-[#b4b4b4] pr-[6px] pl-[9px] text-[10px] font-bold text-[#303030]">
          <span className="whitespace-nowrap">cooger.ai* @ 33.33% (RGB/Preview)</span>
          <button aria-label="Close document">
            <svg viewBox="0 0 7 7" className="h-[7px] w-[7px]" stroke="#222" strokeWidth="2">
              <path d="m1 1 5 5M6 1 1 6" />
            </svg>
          </button>
        </div>
      </div>
      <div className="flex min-h-0 flex-1">
        <div className="relative min-w-0 flex-1 overflow-hidden border-t border-[#6c6c6c] bg-[#7b7b7b]">
          {/* Artboard runs past the bottom of the view */}
          <div className="mt-1 ml-[69px] h-full w-[632px] border border-b-0 border-black bg-white" />
          <Artwork />
        </div>
        <div className="flex w-[14px] shrink-0 flex-col items-center bg-[#c4c4c4] py-[3px] text-[#666]">
          <Chevron dir="up" />
          <span className="mt-[190px] mb-auto h-6 w-[14px] rounded-full bg-[#a6a6a6]" />
          <Chevron />
        </div>
      </div>
      <StatusBar />
    </main>
  );
}

export default function App() {
  return (
    <div className="flex h-screen flex-col overflow-hidden bg-[#b8b8b8] font-['Noto_Sans',sans-serif]">
      <MenuBar />
      <ControlBar />
      <div className="relative flex min-h-0 flex-1">
        <ToolsPanel />
        <div className="relative flex min-w-0 flex-1">
          <DocumentArea />
          <div className="absolute top-[27px] right-0">
            <SwatchesPanel />
          </div>
        </div>
        <RightDock />
      </div>
      <div className="flex h-[2px] shrink-0 bg-black">
        <span className="ml-[45px] w-[322px] bg-[#e8e8e8]" />
        <span className="ml-[277px] w-[45px] bg-[#555]" />
      </div>
    </div>
  );
}
